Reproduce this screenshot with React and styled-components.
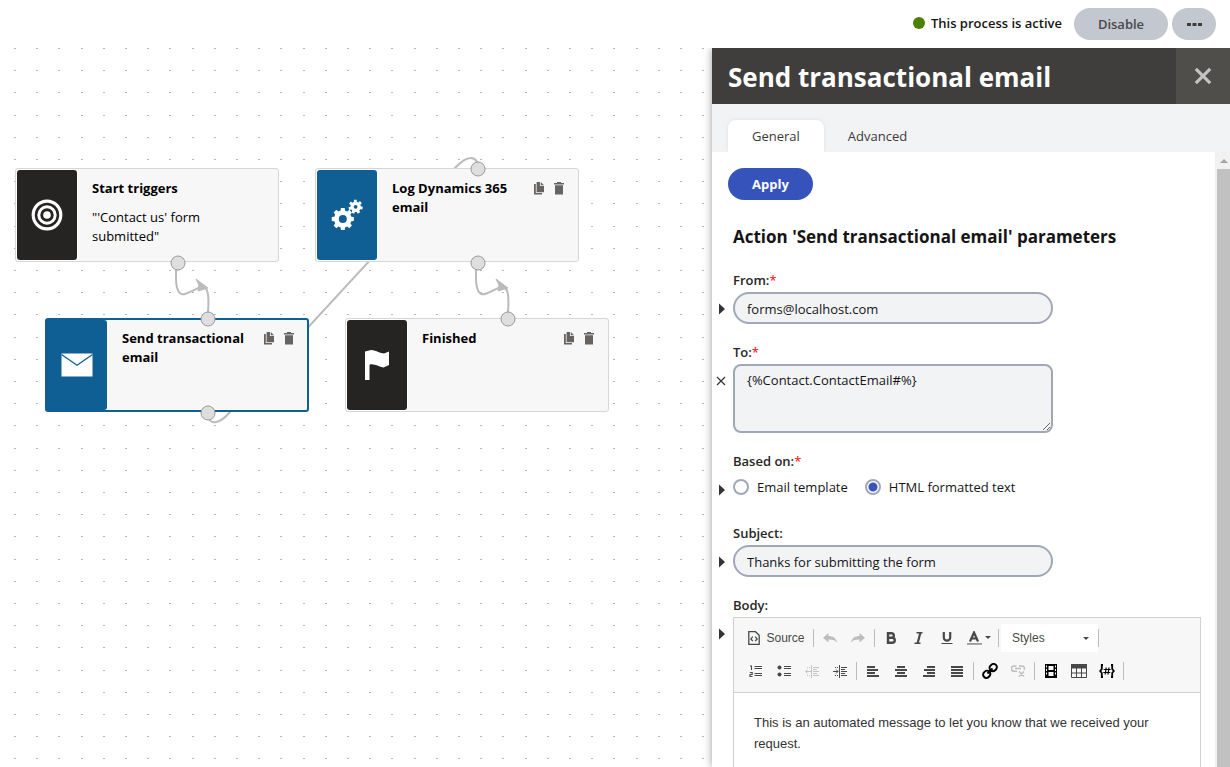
import React from "react";
import styled, { createGlobalStyle } from "styled-components";

const GlobalStyle = createGlobalStyle`
  *, *::before, *::after { box-sizing: border-box; }
  body {
    margin: 0;
    background: #fff;
    color: #151515;
    font-family: "Open Sans", "Noto Sans", sans-serif;
    font-size: 13px;
    line-height: 20px;
    overflow: hidden;
  }
  button, input, textarea, select { font: inherit; color: inherit; }
  button { border: 0; padding: 0; background: none; cursor: pointer; }
  svg { display: block; flex: none; }
`;

const Page = styled.div`
  display: flex;
  flex-direction: column;
  height: 100vh;
`;

const TopBar = styled.header`
  display: flex;
  align-items: center;
  justify-content: flex-end;
  flex: none;
  height: 48px;
  padding-right: 14px;
  background: #fff;
  position: relative;
  z-index: 2;
`;

const Status = styled.div`
  display: flex;
  align-items: center;
  gap: 6px;
  margin-right: 12px;
  padding-bottom: 2px;
  font-weight: 600;
  line-height: 18px;
`;

const StatusDot = styled.span`
  width: 12px;
  height: 12px;
  border-radius: 50%;
  background: #4b8000;
`;

const Pill = styled.button`
  display: flex;
  align-items: center;
  justify-content: center;
  width: ${(p) => p.$width}px;
  height: 32px;
  border-radius: 16px;
  font-weight: ${(p) => (p.$primary ? 700 : 600)};
  background: ${(p) => (p.$primary ? "#3553ba" : "#c3c7d0")};
  color: ${(p) => (p.$primary ? "#fff" : "#484848")};
  & + & { margin-left: 4px; }
`;

const Workspace = styled.div`
  display: flex;
  flex: 1;
  min-height: 0;
`;

const Canvas = styled.main`
  position: relative;
  flex: 1;
  min-width: 0;
  overflow: hidden;
`;

const CanvasLayer = styled.svg`
  position: absolute;
  inset: 0;
  width: 100%;
  height: 100%;
`;

const Node = styled.article`
  position: absolute;
  left: ${(p) => p.$x}px;
  top: ${(p) => p.$y}px;
  display: flex;
  width: 264px;
  height: 94px;
  padding: ${(p) => (p.$selected ? 0 : 1)}px;
  border: ${(p) => (p.$selected ? "2px solid #0f5f94" : "1px solid #d6d6d6")};
  border-radius: 3px;
  background: #f7f7f7;
`;

const NodeIcon = styled.div`
  display: flex;
  align-items: center;
  justify-content: center;
  flex: none;
  width: 60px;
  border-radius: ${(p) => (p.$selected ? "0 3px 3px 0" : "3px")};
  background: ${(p) => (p.$blue ? "#0f5f94" : "#262423")};
  box-shadow: ${(p) => (p.$selected ? "none" : "0 0 0 1px #fff")};
`;

const NodeText = styled.div`
  flex: 1;
  padding: 9px 10px 0 15px;
  line-height: 19px;
  color: #000;
`;

const NodeTitle = styled.h3`
  margin: 0;
  font-size: 13px;
  font-weight: 700;
`;

const NodeDescription = styled.p`
  margin: 10px 0 0;
`;

const NodeActions = styled.div`
  display: flex;
  gap: 10px;
  padding: 12px 13px 0 0;
  align-items: flex-start;
`;

const Panel = styled.aside`
  display: flex;
  flex-direction: column;
  flex: none;
  width: 518px;
  position: relative;
  box-shadow: 0 0 8px rgba(0, 0, 0, 0.4);
  background: #fff;
`;

const PanelHeader = styled.div`
  display: flex;
  flex: none;
  height: 56px;
  background: #403e3c;
  color: #fff;
`;

const PanelTitle = styled.h1`
  flex: 1;
  margin: 0;
  padding-left: 16px;
  font-size: 26px;
  line-height: 58px;
  font-weight: 700;
`;

const CloseButton = styled.button`
  display: flex;
  align-items: center;
  justify-content: center;
  width: 54px;
  background: #504e4b;
`;

const Tabs = styled.div`
  display: flex;
  flex: none;
  height: 48px;
  padding: 16px 16px 0;
  background: #f2f3f5;
`;

const Tab = styled.button`
  padding: 0 24px;
  height: 32px;
  border-radius: 8px 8px 0 0;
  color: #3a3a3a;
  background: ${(p) => (p.$active ? "#fff" : "transparent")};
  box-shadow: ${(p) => (p.$active ? "0 0 4px rgba(0, 0, 0, 0.08)" : "none")};
  clip-path: inset(-4px -4px 0 -4px);
`;

const PanelBody = styled.div`
  display: flex;
  flex: 1;
  min-height: 0;
`;

const FormArea = styled.div`
  flex: 1;
  min-width: 0;
  overflow: hidden;
  padding: 16px 14px 0 0;
`;

const ApplyRow = styled.div`
  padding-left: 16px;
`;

const FormHeading = styled.h2`
  margin: 25px 0 21px 21px;
  font-size: 17px;
  line-height: 24px;
  font-weight: 700;
`;

const Field = styled.div`
  display: grid;
  grid-template-columns: 21px 1fr;
  row-gap: 2px;
  margin-bottom: 18px;
`;

const labelStyle = `
  grid-column: 2;
  font-weight: 600;
  line-height: 20px;
  color: #262626;
`;

const Label = styled.label`${labelStyle}`;
const GroupLabel = styled.div`${labelStyle}`;

const Required = styled.span`
  color: #f00;
  font-weight: 400;
`;

const Marker = styled.button`
  display: flex;
  align-items: center;
  padding: 2px 0 0 ${(p) => (p.$wide ? 4 : 7)}px;
  height: 32px;
`;

const Input = styled.input`
  width: 320px;
  height: 32px;
  padding: 1px 12px 0;
  border: 2px solid #a0a8b8;
  border-radius: 16px;
  background: #f2f3f5;
  outline: 0;
`;

const TextArea = styled.textarea`
  display: block;
  width: 320px;
  height: 69px;
  padding: 4px 12px;
  border: 2px solid #a0a8b8;
  border-radius: 8px;
  background: #f2f3f5;
  outline: 0;
  resize: both;
`;

const RadioRow = styled.div`
  display: flex;
  gap: 17px;
  height: 32px;
  padding-bottom: 4px;
`;

const RadioLabel = styled.label`
  display: flex;
  align-items: center;
  gap: 8px;
`;

const Radio = styled.input`
  appearance: none;
  width: 16px;
  height: 16px;
  margin: 0;
  border: 2px solid #a0a8b8;
  border-radius: 50%;
  background: #fff;
  &:checked { background: radial-gradient(circle, #3553ba 4px, #fff 5px); }
`;

const Editor = styled.div`
  border: 1px solid #d1d1d1;
  font-family: "Liberation Sans", Arial, sans-serif;
`;

const Toolbar = styled.div`
  display: flex;
  flex-direction: column;
  gap: 5px;
  padding: 6px 8px 7px;
  border-bottom: 1px solid #d1d1d1;
  background: #f7f7f7;
  font-size: 12px;
`;

const ToolRow = styled.div`
  display: flex;
  align-items: center;
  height: 28px;
`;

const Tool = styled.button`
  display: flex;
  align-items: center;
  justify-content: center;
  gap: 6px;
  width: ${(p) => p.$width || 28}px;
  height: 28px;
  color: #484848;
`;

const Divider = styled.span`
  width: 1px;
  height: 18px;
  margin: 0 2px;
  background: #bcbcbc;
`;

const StyleBox = styled.div`
  display: flex;
  align-items: center;
  width: 97px;
  height: 28px;
  padding-right: 9px;
  background: #fff;
`;

const StyleBoxEdge = styled(Divider)`
  margin: 0;
`;

const StyleSelect = styled.select`
  appearance: none;
  flex: 1;
  height: 28px;
  padding: 0 0 0 11px;
  border: 0;
  background: transparent;
  color: #484848;
  outline: 0;
`;

const Message = styled.p`
  margin: 0;
  padding: 19px 20px;
  min-height: 120px;
  font-size: 13px;
  line-height: 21px;
  color: #333;
`;

const ScrollTrack = styled.div`
  flex: none;
  display: flex;
  flex-direction: column;
  width: 15px;
  padding-left: 2px;
  background: #f1f1f1;
`;

const ScrollArrow = styled.div`
  display: flex;
  align-items: center;
  justify-content: center;
  height: 17px;
`;

const ScrollThumb = styled.div`
  flex: 1;
  background: #c1c1c1;
`;

const gearPath = (cx, cy, outer, inner, teeth, turn) => {
  const step = (Math.PI * 2) / teeth;
  const points = [];
  for (let i = 0; i < teeth; i += 1) {
    const a = (i + turn) * step;
    [[-0.32, inner], [-0.22, outer], [0.22, outer], [0.32, inner]].forEach(([f, r]) => {
      points.push(`${(cx + Math.cos(a + f * step) * r).toFixed(2)} ${(cy + Math.sin(a + f * step) * r).toFixed(2)}`);
    });
  }
  return `M${points.join("L")}Z`;
};

const TargetIcon = () => (
  <svg width="32" height="32" viewBox="0 0 32 32" fill="none" stroke="#fff">
    <circle cx="16" cy="16" r="13.8" strokeWidth="3.2" />
    <circle cx="16" cy="16" r="8.2" strokeWidth="3" />
    <circle cx="16" cy="16" r="3.8" fill="#fff" stroke="none" />
  </svg>
);

const GearsIcon = () => (
  <svg width="32" height="32" viewBox="0 0 32 32" fill="#fff" stroke="none">
    <path d={gearPath(11.8, 20, 11.2, 8.8, 8, 0)} />
    <circle cx="11.8" cy="20" r="4" fill="#0f5f94" />
    <path d={gearPath(24.6, 7.8, 7.2, 5.2, 7, 0.2)} />
    <circle cx="24.6" cy="7.8" r="1.900" fill="#0f5f94" />
  </svg>
);

const MailIcon = () => (
  <svg width="32" height="32" viewBox="0 0 32 32">
    <path d="M.5 4.5h31v23H.5z" fill="#fff" />
    <path d="M.5 5.5 16 16.300 31.500 5.500" fill="none" stroke="#0f5f94" strokeWidth="1.300" />
  </svg>
);

const FlagIcon = () => (
  <svg width="32" height="32" viewBox="0 0 32 32" fill="#fff">
    <path d="M4 2.500 10 1c6 .500 9 3.500 13 3.500L28 2.500V16l-5.500 2.500c-5-1-9-4-13-3.200L8.500 16V31H4z" />
  </svg>
);

const CopyIcon = () => (
  <svg width="10" height="13" viewBox="0 0 10 13" fill="#676360">
    <path d="M0 2h1.800v9H8v1.500H0z" />
    <path d="M2.600 0H6v4h4v6.300H2.600z" />
    <path d="M6.800 0 10 3.200H6.800z" />
  </svg>
);

const TrashIcon = () => (
  <svg width="10" height="13" viewBox="0 0 10 13" fill="#676360">
    <path d="M3 0h4v1h3v1.600H0V1h3zM1 3.300h8v9.200H1z" />
  </svg>
);

const icons = {
  source: (
    <svg width="12" height="14" viewBox="0 0 12 14" fill="none" stroke="#484848">
      <path d="M.8.700h6.700l3.700 3.600v9H.8zM4.800 5.700 2.900 7.900l1.900 2.200M7.200 5.700l1.900 2.200-1.900 2.200" strokeWidth="1.300" />
    </svg>
  ),
  undo: (
    <svg width="14" height="10" viewBox="0 0 14 10" fill="#bdbdbd">
      <path d="M5.500 0v3C10 3 13 5 14 9.500 11.500 7 9 6.500 5.500 6.600V9.500L0 4.800z" />
    </svg>
  ),
  redo: (
    <svg width="14" height="10" viewBox="0 0 14 10" fill="#bdbdbd">
      <path d="M8.500 0v3C4 3 1 5 0 9.500 2.500 7 5 6.500 8.500 6.600V9.500L14 4.800z" />
    </svg>
  ),
  bold: (
    <svg width="12" height="12" viewBox="0 0 12 12" fill="none" stroke="#484848" strokeWidth="2.400">
      <path d="M3 1.200h3.600a2.200 2.200 0 0 1 0 4.500H3zM3 5.700h4.200a2.500 2.500 0 0 1 0 5.100H3z" />
    </svg>
  ),
  italic: (
    <svg width="12" height="12" viewBox="0 0 12 12" fill="none" stroke="#484848">
      <path d="M7.300 1 4.700 11" strokeWidth="2.200" />
      <path d="M3.500.800h6M1.500 11.200h6" strokeWidth="1.500" />
    </svg>
  ),
  underline: (
    <svg width="12" height="14" viewBox="0 0 12 14" fill="none" stroke="#484848">
      <path d="M2.800 1v5.500a3.200 3.200 0 0 0 6.400 0V1" strokeWidth="2.200" />
      <path d="M.500 12.500h11" strokeWidth="1" />
    </svg>
  ),
  color: (
    <svg width="24" height="14" viewBox="0 0 24 14">
      <path d="M3 10.500 7 1.500 11 10.500M4.300 7.500h5.400" fill="none" stroke="#484848" strokeWidth="2.200" />
      <path d="M0 12h15v1.800H0z" fill="#999" />
      <path d="M18 5h6l-3 3z" fill="#484848" />
    </svg>
  ),
  numbered: (
    <svg width="14" height="12" viewBox="0 0 14 12" fill="none" stroke="#484848" strokeWidth="1.100">
      <path d="M1 1h1.500v4M.800 7.500h2.400v2H1v2h2.500M5.500 1.500H13M5.500 3.500H13M5.500 8.500H13M5.500 10.500H13" />
    </svg>
  ),
  bullets: (
    <svg width="14" height="12" viewBox="0 0 14 12" fill="none" stroke="#484848">
      <path d="M7 1.500h7M7 3.500h7M7 8.500h7M7 10.500h7" />
      <circle cx="2.500" cy="2.500" r="2" fill="#484848" stroke="none" />
      <circle cx="2.500" cy="9.500" r="2" fill="#484848" stroke="none" />
    </svg>
  ),
  outdent: (
    <svg width="14" height="13" viewBox="0 0 14 13" fill="none" stroke="#c4c4c4">
      <path d="M6.500 0v13M8 2.500h6M8 4.500h4M8 6.500h6M8 8.500h4M8 10.500h6M2 2.500h1M4 2.500h1M2 10.500h1M4 10.500h1M1 6.500h5M2.500 4.500l-2 2 2 2" />
    </svg>
  ),
  indent: (
    <svg width="14" height="13" viewBox="0 0 14 13" fill="none" stroke="#484848">
      <path d="M6.500 0v13M8 2.500h6M8 4.500h4M8 6.500h6M8 8.500h4M8 10.500h6M2 2.500h1M4 2.500h1M2 10.500h1M4 10.500h1M0 6.500h5M3 4.500l2 2-2 2" />
    </svg>
  ),
  alignLeft: (
    <svg width="12" height="11" viewBox="0 0 12 11" fill="#484848">
      <path d="M0 0h8v2H0zM0 3h11v2H0zM0 6h8v2H0zM0 9h12v2H0z" />
    </svg>
  ),
  alignCenter: (
    <svg width="12" height="11" viewBox="0 0 12 11" fill="#484848">
      <path d="M2 0h8v2H2zM0 3h12v2H0zM2 6h8v2H2zM0 9h12v2H0z" />
    </svg>
  ),
  alignRight: (
    <svg width="12" height="11" viewBox="0 0 12 11" fill="#484848">
      <path d="M4 0h8v2H4zM1 3h11v2H1zM4 6h8v2H4zM0 9h12v2H0z" />
    </svg>
  ),
  justify: (
    <svg width="12" height="11" viewBox="0 0 12 11" fill="#484848">
      <path d="M0 0h12v2H0zM0 3h12v2H0zM0 6h12v2H0zM0 9h12v2H0z" />
    </svg>
  ),
  link: (
    <svg width="16" height="16" viewBox="0 0 16 16" fill="none" stroke="#000" strokeWidth="2">
      <rect x="7.500" y="1.300" width="7.500" height="6.500" rx="3.200" transform="rotate(-45 11.200 4.600)" />
      <rect x="1" y="8" width="7.500" height="6.500" rx="3.200" transform="rotate(-45 4.800 11.300)" />
      <path d="M5.500 10.500l5-5" />
    </svg>
  ),
  unlink: (
    <svg width="14" height="12" viewBox="0 0 14 12" fill="none" stroke="#bdbdbd" strokeWidth="1.500">
      <path d="M5.500 1H3a2.400 2.400 0 0 0 0 5.200h3M8 1h3a2.400 2.400 0 0 1 2 3.800M4 3.600h6M8 6.500l5 5M13 6.500l-5 5" />
    </svg>
  ),
  media: (
    <svg width="12" height="14" viewBox="0 0 12 14">
      <path d="M0 0h12v14H0z" fill="#000" />
      <path d="M3.500 2h5v4h-5zM3.500 8h5v4h-5zM1 1.500h1v2H1zM1 5h1v2H1zM1 8.500h1v2H1zM10 1.500h1v2h-1zM10 5h1v2h-1zM10 8.500h1v2h-1z" fill="#f7f7f7" />
    </svg>
  ),
  table: (
    <svg width="16" height="14" viewBox="0 0 16 14" fill="none" stroke="#484848">
      <path d="M.500.500h15v13H.500zM.500 9h15M5.500 4v9.500M10.500 4v9.500" />
      <path d="M0 0h16v4.500H0z" fill="#484848" stroke="none" />
    </svg>
  ),
  macro: (
    <svg width="16" height="14" viewBox="0 0 16 14" fill="none" stroke="#000">
      <path d="M4 1H2.800v4L1.200 7l1.600 2v4H4M12 1h1.200v4l1.600 2-1.600 2v4H12" strokeWidth="1.800" />
      <path d="M7.200 3.500 6.200 10.500M10 3.500 9 10.500M4.700 5.500h7M4.300 8.500h7" strokeWidth="1.200" />
    </svg>
  ),
};

const Caret = () => (
  <svg width="6" height="12" viewBox="0 0 6 12" fill="#333"><path d="M0 .500 6 6 0 11.500z" /></svg>
);

const Cross = ({ size, color, weight }) => (
  <svg width={size} height={size} viewBox="0 0 10 10" fill="none" stroke={color} strokeWidth={weight}>
    <path d="M1 1l8 8M9 1 1 9" />
  </svg>
);

const ToolGroup = ({ names, labels }) =>
  names.map((name, i) => (
    <Tool key={name} type="button" aria-label={labels[i]}>{icons[name]}</Tool>
  ));

const nodes = [
  { x: 15, y: 120, icon: <TargetIcon />, title: "Start triggers", text: "\"'Contact us' form submitted\"" },
  { x: 315, y: 120, icon: <GearsIcon />, title: "Log Dynamics 365 email", blue: true, actions: true },
  { x: 45, y: 270, icon: <MailIcon />, title: "Send transactional email", blue: true, selected: true, actions: true },
  { x: 345, y: 270, icon: <FlagIcon />, title: "Finished", actions: true },
];

const ports = [[178, 215], [478, 121], [478, 215], [208, 271], [208, 365], [508, 271]];

const dotSteps = [0, 22.2, 44.4, 66.6, 88.8];

function Connector({ x }) {
  return (
    <g transform={`translate(${x} 0)`}>
      <path d="M176 215v15c0 11 3 18 9 16 7-2 12-6 16-7 8-2 8 12 7 25" fill="none" stroke="#bbb" strokeWidth="2" />
      <path d="M196 231l12 9-10 3 1-6z" fill="#bbb" stroke="#bbb" />
    </g>
  );
}

function ProcessCanvas() {
  return (
    <Canvas>
      <CanvasLayer aria-hidden="true">
        <defs>
          <pattern id="dots" width="111" height="111" patternUnits="userSpaceOnUse">
            {dotSteps.map((y) =>
              dotSteps.map((x) => (
                <rect key={`${x}-${y}`} x={Math.round(x + 14)} y={Math.round(y)} width="2" height="1" fill="#a9bcc3" />
              ))
            )}
          </pattern>
        </defs>
        <rect width="100%" height="100%" fill="url(#dots)" />
        <path d="M208 365c0 14 12 11 22 -1L455 120c12-13 23-14 23 1" fill="none" stroke="#bbb" strokeWidth="2" />
        <Connector x={0} />
        <Connector x={300} />
      </CanvasLayer>
      {nodes.map((n) => (
        <Node key={n.title} $x={n.x} $y={n.y} $selected={n.selected}>
          <NodeIcon $blue={n.blue} $selected={n.selected}>{n.icon}</NodeIcon>
          <NodeText>
            <NodeTitle>{n.title}</NodeTitle>
            {n.text && <NodeDescription>{n.text}</NodeDescription>}
          </NodeText>
          {n.actions && (
            <NodeActions>
              <button type="button" aria-label="Copy step"><CopyIcon /></button>
              <button type="button" aria-label="Delete step"><TrashIcon /></button>
            </NodeActions>
          )}
        </Node>
      ))}
      <CanvasLayer aria-hidden="true" pointerEvents="none">
        {ports.map(([x, y]) => (
          <circle key={`${x}-${y}`} cx={x} cy={y} r="7" fill="#dedede" stroke="#999" />
        ))}
      </CanvasLayer>
    </Canvas>
  );
}

function BodyEditor() {
  return (
    <Editor>
      <Toolbar role="toolbar" aria-label="Editor">
        <ToolRow>
          <Tool type="button" $width={69}>{icons.source}Source</Tool>
          <Divider />
          <ToolGroup names={["undo", "redo"]} labels={["Undo", "Redo"]} />
          <Divider />
          <ToolGroup names={["bold", "italic", "underline"]} labels={["Bold", "Italic", "Underline"]} />
          <Tool type="button" $width={35} aria-label="Text color">{icons.color}</Tool>
          <Divider />
          <StyleBox>
            <StyleSelect aria-label="Styles" defaultValue="Styles"><option>Styles</option></StyleSelect>
            <svg width="6" height="3" viewBox="0 0 6 3" fill="#484848"><path d="M0 0h6L3 3z" /></svg>
          </StyleBox>
          <StyleBoxEdge />
        </ToolRow>
        <ToolRow>
          <ToolGroup
            names={["numbered", "bullets", "outdent", "indent"]}
            labels={["Numbered list", "Bulleted list", "Decrease indent", "Increase indent"]}
          />
          <Divider />
          <ToolGroup
            names={["alignLeft", "alignCenter", "alignRight", "justify"]}
            labels={["Align left", "Center", "Align right", "Justify"]}
          />
          <Divider />
          <ToolGroup names={["link", "unlink"]} labels={["Link", "Unlink"]} />
          <Divider />
          <ToolGroup names={["media", "table", "macro"]} labels={["Insert media", "Table", "Insert macro"]} />
          <Divider />
        </ToolRow>
      </Toolbar>
      <Message>This is an automated message to let you know that we received your request.</Message>
    </Editor>
  );
}

export default function App() {
  return (
    <Page>
      <GlobalStyle />
      <TopBar>
        <Status><StatusDot />This process is active</Status>
        <Pill type="button" $width={94}>Disable</Pill>
        <Pill type="button" $width={44} aria-label="More actions">
          <svg width="15" height="3" viewBox="0 0 15 3" fill="#403e3c"><path d="M0 0h4v3H0zM5.500 0h4v3h-4zM11 0h4v3h-4z" /></svg>
        </Pill>
      </TopBar>
      <Workspace>
        <ProcessCanvas />
        <Panel>
          <PanelHeader>
            <PanelTitle>Send transactional email</PanelTitle>
            <CloseButton type="button" aria-label="Close"><Cross size={18} color="#c4c4c4" weight={1.7} /></CloseButton>
          </PanelHeader>
          <Tabs role="tablist">
            <Tab type="button" role="tab" aria-selected="true" $active>General</Tab>
            <Tab type="button" role="tab" aria-selected="false">Advanced</Tab>
          </Tabs>
          <PanelBody>
            <FormArea>
              <ApplyRow><Pill type="button" $primary $width={85}>Apply</Pill></ApplyRow>
              <FormHeading>Action 'Send transactional email' parameters</FormHeading>
              <Field>
                <Label htmlFor="from">From:<Required>*</Required></Label>
                <Marker type="button" aria-label="Expand From"><Caret /></Marker>
                <Input id="from" defaultValue="forms@localhost.com" />
              </Field>
              <Field>
                <Label htmlFor="to">To:<Required>*</Required></Label>
                <Marker type="button" $wide aria-label="Clear To"><Cross size={10} color="#333" weight={1.2} /></Marker>
                <TextArea id="to" defaultValue="{%Contact.ContactEmail#%}" />
              </Field>
              <Field role="radiogroup" aria-labelledby="based">
                <GroupLabel id="based">Based on:<Required>*</Required></GroupLabel>
                <Marker type="button" aria-label="Expand Based on"><Caret /></Marker>
                <RadioRow>
                  <RadioLabel><Radio type="radio" name="based" />Email template</RadioLabel>
                  <RadioLabel><Radio type="radio" name="based" defaultChecked />HTML formatted text</RadioLabel>
                </RadioRow>
              </Field>
              <Field>
                <Label htmlFor="subject">Subject:</Label>
                <Marker type="button" aria-label="Expand Subject"><Caret /></Marker>
                <Input id="subject" defaultValue="Thanks for submitting the form" />
              </Field>
              <Field>
                <GroupLabel>Body:</GroupLabel>
                <Marker type="button" aria-label="Expand Body"><Caret /></Marker>
                <BodyEditor />
              </Field>
            </FormArea>
            <ScrollTrack>
              <ScrollArrow>
                <svg width="8" height="4" viewBox="0 0 8 4" fill="#a3a3a3"><path d="M0 4h8L4 0z" /></svg>
              </ScrollArrow>
              <ScrollThumb />
            </ScrollTrack>
          </PanelBody>
        </Panel>
      </Workspace>
    </Page>
  );
}
